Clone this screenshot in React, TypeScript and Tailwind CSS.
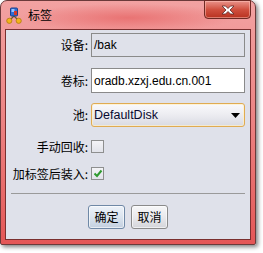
import React from 'react';

const cjk = "font-['Noto_Sans_CJK_SC','Noto_Sans',sans-serif]";
const latin = "font-['Liberation_Sans','Noto_Sans_CJK_SC',sans-serif]";

function TitleIcon() {
  return (
    <svg width="16" height="17" viewBox="0 0 16 17">
      <path d="M8 9 L3.5 13.5 M8 9 L12.5 13.5" stroke="#6a5a2a" strokeWidth="1.2" />
      <rect x="4.5" y="1" width="7" height="8" rx="1" fill="#2f6fd6" stroke="#1b3f8a" />
      <rect x="5.5" y="2" width="3" height="3" fill="#9cc4ff" />
      <rect x="8" y="4" width="3" height="4" fill="#d23a2a" />
      <circle cx="3.3" cy="13.8" r="2.6" fill="#f4b41a" stroke="#b07a10" strokeWidth="0.8" />
      <circle cx="12.7" cy="13.8" r="2.6" fill="#f4b41a" stroke="#b07a10" strokeWidth="0.8" />
    </svg>
  );
}

function CloseGlyph() {
  return (
    <svg width="14" height="10" viewBox="0 0 14 10">
      <path
        d="M1 1 H4.5 L7 3.5 L9.5 1 H13 L9 5 L13 9 H9.5 L7 6.5 L4.5 9 H1 L5 5 Z"
        fill="#ffffff"
        stroke="#5a2a2a"
        strokeWidth="0.8"
        strokeLinejoin="round"
      />
    </svg>
  );
}

function Row({ label, children, className = '' }: { label: string; children: React.ReactNode; className?: string }) {
  return (
    <div className={`flex items-center ${className}`}>
      <span className={`w-[82px] shrink-0 text-right text-[12px] leading-none text-black ${cjk}`}>{label}</span>
      <div className="ml-[3px] w-[154px]">{children}</div>
    </div>
  );
}

function CheckBox({ checked }: { checked?: boolean }) {
  return (
    <div className="w-[13px] h-[13px] border border-[#8e8f8f] bg-gradient-to-b from-[#f4f4f7] to-[#e2e3ea] flex items-center justify-center">
      {checked && (
        <svg width="10" height="9" viewBox="0 0 10 9">
          <path d="M1.5 4.5 L4 7 L8.5 1.5" fill="none" stroke="#2f9a2f" strokeWidth="2" />
        </svg>
      )}
    </div>
  );
}

export default function App() {
  return (
    <div className="w-[263px] h-[253px] bg-white">
      <div className="relative w-[256px] h-[245px] flex flex-col rounded-t-[7px] rounded-b-[2px] border border-[#6b3a3a] bg-gradient-to-b from-[#f2a2a2] via-[#ec8282] to-[#e45656] shadow-[2px_2px_4px_rgba(0,0,0,0.5)]">
        {/* title bar */}
        <div className="h-[28px] flex items-center pl-[5px] gap-[6px] bg-[radial-gradient(ellipse_at_50%_60%,#e97373_0%,transparent_60%)] rounded-t-[7px]">
          <TitleIcon />
          <span className={`text-[12px] text-black leading-none ${cjk}`}>标签</span>
        </div>
        <div className="absolute top-[-1px] right-[4px] w-[47px] h-[19px] rounded-b-[4px] border border-[#6e2a24] bg-gradient-to-b from-[#e9928a] via-[#d0503f] to-[#b8311f] shadow-[inset_0_0_0_1px_rgba(255,200,190,0.5)] flex items-center justify-center">
          <CloseGlyph />
        </div>

        {/* content panel */}
        <div className="mx-[4px] h-[211px] border border-[#7a2f2f] bg-[#dfe1ea] flex flex-col">
          <Row label="设备:" className="mt-[3px]">
            <div className={`h-[24px] border border-[#8a8a8a] bg-[#dfe1ea] flex items-center pl-[2px] text-[12px] text-black ${latin}`}>/bak</div>
          </Row>
          <Row label="卷标:" className="mt-[11px]">
            <div className={`h-[25px] border border-[#8a8a8a] bg-white flex items-center pl-[2px] text-[12px] text-black ${latin}`}>oradb.xzxj.edu.cn.001</div>
          </Row>
          <Row label="池:" className="mt-[10px]">
            <div className={`h-[24px] rounded-[3px] border border-[#e0ab52] bg-gradient-to-b from-[#fafafc] via-[#ececf1] to-[#d9dae2] shadow-[inset_0_0_0_1px_rgba(255,240,200,0.7)] flex items-center pl-[2px] pr-[4px] text-[12.5px] text-[#0a0a30] ${latin}`}>
              <span className="flex-1">DefaultDisk</span>
              <svg width="9" height="5" viewBox="0 0 9 5">
                <path d="M0 0 H9 L4.5 5 Z" fill="#000" />
              </svg>
            </div>
          </Row>
          <Row label="手动回收:" className="mt-[13px]">
            <CheckBox />
          </Row>
          <Row label="加标签后装入:" className="mt-[14px]">
            <CheckBox checked />
          </Row>
          <div className="mt-[13px] mx-[5px] h-px bg-[#9a9a9a]" />
          <div className="mt-[11px] flex justify-center gap-[6px]">
            <button className={`w-[37px] h-[24px] rounded-[3px] border border-[#6f88a6] bg-gradient-to-b from-[#edf2f9] via-[#dbe4ef] to-[#c3cfdf] shadow-[inset_0_0_0_1px_rgba(255,255,255,0.6)] text-[12px] text-black leading-none ${cjk}`}>确定</button>
            <button className={`w-[37px] h-[24px] rounded-[3px] border border-[#8a8a8a] bg-gradient-to-b from-[#f7f7f8] via-[#e9e9ec] to-[#d4d5da] shadow-[inset_0_0_0_1px_rgba(255,255,255,0.6)] text-[12px] text-black leading-none ${cjk}`}>取消</button>
          </div>
        </div>
      </div>
    </div>
  );
}
